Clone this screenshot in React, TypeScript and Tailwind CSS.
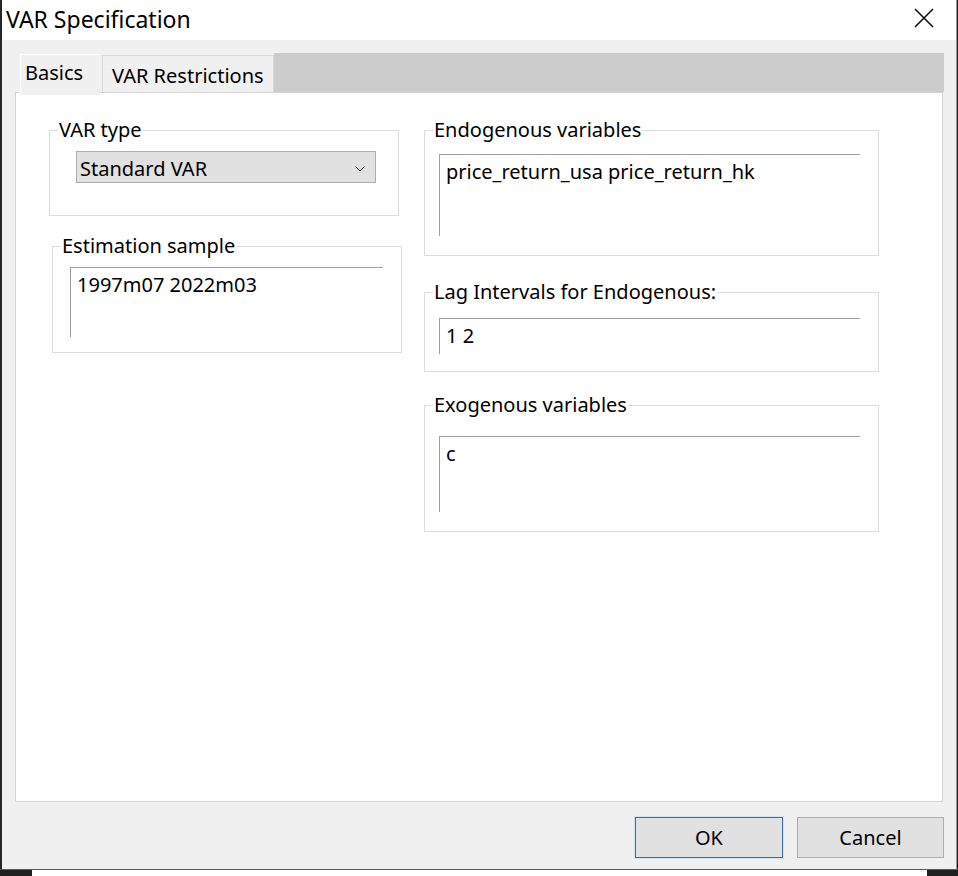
import type { ReactNode } from "react";

function Group({
  label,
  className,
  children,
}: {
  label: string;
  className: string;
  children: ReactNode;
}) {
  return (
    <fieldset className={`border border-[#dcdcdc] ${className}`}>
      <legend className="ml-[8px] px-[1px] leading-[20px]">{label}</legend>
      {children}
    </fieldset>
  );
}

function EditBox({ className, value }: { className: string; value: string }) {
  return (
    <div className={`border-t border-l border-[#a0a0a0] pt-[7px] pl-[6px] leading-[20px] whitespace-nowrap ${className}`}>
      {value}
    </div>
  );
}

export default function App() {
  return (
    <div className="w-[958px] h-[876px] overflow-hidden flex flex-col bg-[#1f1f1f] text-[20px] text-black font-['Noto_Sans',sans-serif]">
      <div className="h-[869px] w-[957px] flex flex-col border-l-2 border-r border-l-[#262626] border-r-[#9a9a9a]">
        {/* Title bar */}
        <div className="h-[40px] shrink-0 bg-white flex items-center justify-between pl-[4px] pr-[22px]">
          <span className="text-[23px] leading-[28px] -mt-[3px]">VAR Specification</span>
          <svg width="20" height="20" viewBox="0 0 20 20" className="-mt-[4px]">
            <path d="M1 1L19 19M19 1L1 19" stroke="#111" strokeWidth="1.6" fill="none" />
          </svg>
        </div>

        {/* Dialog body */}
        <div className="flex-1 bg-[#f0f0f0] flex flex-col pt-[13px]">
          {/* Tabs */}
          <div className="ml-[13px] w-[929px] h-[39px] flex shrink-0">
            <div className="w-[5px]" />
            <div className="relative z-10 mt-[1px] w-[80px] h-[41px] bg-[#f0f0f0] border-t border-l border-white pl-[4px] leading-[20px] pt-[8px]">
              Basics
            </div>
            <div className="w-[2px]" />
            <div className="mt-[2px] w-[172px] h-[37px] bg-[#f0f0f0] border border-b-0 border-[#d9d9d9] pl-[9px] leading-[20px] pt-[10px] whitespace-nowrap">
              VAR Restrictions
            </div>
            <div className="flex-1 bg-[#cccccc]" />
          </div>

          {/* Tab panel */}
          <div className="ml-[13px] w-[928px] h-[710px] shrink-0 bg-white border border-[#d4d4d4] flex pt-[27px] pl-[33px]">
            <div className="w-[353px] flex flex-col">
              <Group label="VAR type" className="w-[350px] h-[96px]">
                <div className="mt-[11px] ml-[26px] w-[300px] h-[32px] bg-[#e1e1e1] border border-[#adadad] flex items-center justify-between pl-[3px] pr-[10px] pt-[3px] leading-[20px]">
                  <span>Standard VAR</span>
                  <svg width="10" height="6" viewBox="0 0 10 6">
                    <path d="M0.5 0.5L5 5L9.5 0.5" stroke="#3a3a3a" strokeWidth="1" fill="none" />
                  </svg>
                </div>
              </Group>
              <Group label="Estimation sample" className="mt-[20px] ml-[3px] w-[350px] h-[117px]">
                <EditBox className="mt-[11px] ml-[17px] w-[313px] h-[70px]" value="1997m07 2022m03" />
              </Group>
            </div>

            <div className="ml-[22px] w-[455px] flex flex-col">
              <Group label="Endogenous variables" className="w-[455px] h-[136px]">
                <EditBox className="mt-[14px] ml-[14px] w-[421px] h-[82px]" value="price_return_usa price_return_hk" />
              </Group>
              <Group label="Lag Intervals for Endogenous:" className="mt-[26px] w-[455px] h-[90px]">
                <EditBox className="mt-[16px] ml-[14px] w-[421px] h-[36px]" value="1 2" />
              </Group>
              <Group label="Exogenous variables" className="mt-[23px] w-[455px] h-[137px]">
                <EditBox className="mt-[21px] ml-[14px] w-[421px] h-[76px]" value="c" />
              </Group>
            </div>
          </div>

          {/* Buttons */}
          <div className="mt-[15px] flex justify-end gap-[14px] pr-[12px]">
            <button className="w-[148px] h-[41px] bg-[#e1e1e1] border border-[#3f6d96] outline outline-1 outline-[#cfe3f5] leading-[20px]">
              OK
            </button>
            <button className="w-[147px] h-[41px] bg-[#e1e1e1] border border-[#adadad] leading-[20px]">
              Cancel
            </button>
          </div>
        </div>
      </div>

      {/* Window behind the dialog */}
      <div className="h-[7px] flex border-t border-[#5a5a5a]">
        <div className="w-[32px] bg-[#1f1f1f]" />
        <div className="flex-1 bg-white overflow-hidden">
          <div className="flex text-[22px] leading-[26px] text-[#222] pt-[1px]">
            <span className="ml-[28px] w-[303px]">Log likelihood</span>
            <span className="w-[154px]">660.9788</span>
            <span>773.9708</span>
          </div>
        </div>
        <div className="w-[31px] bg-[#1f1f1f]" />
      </div>
    </div>
  );
}
